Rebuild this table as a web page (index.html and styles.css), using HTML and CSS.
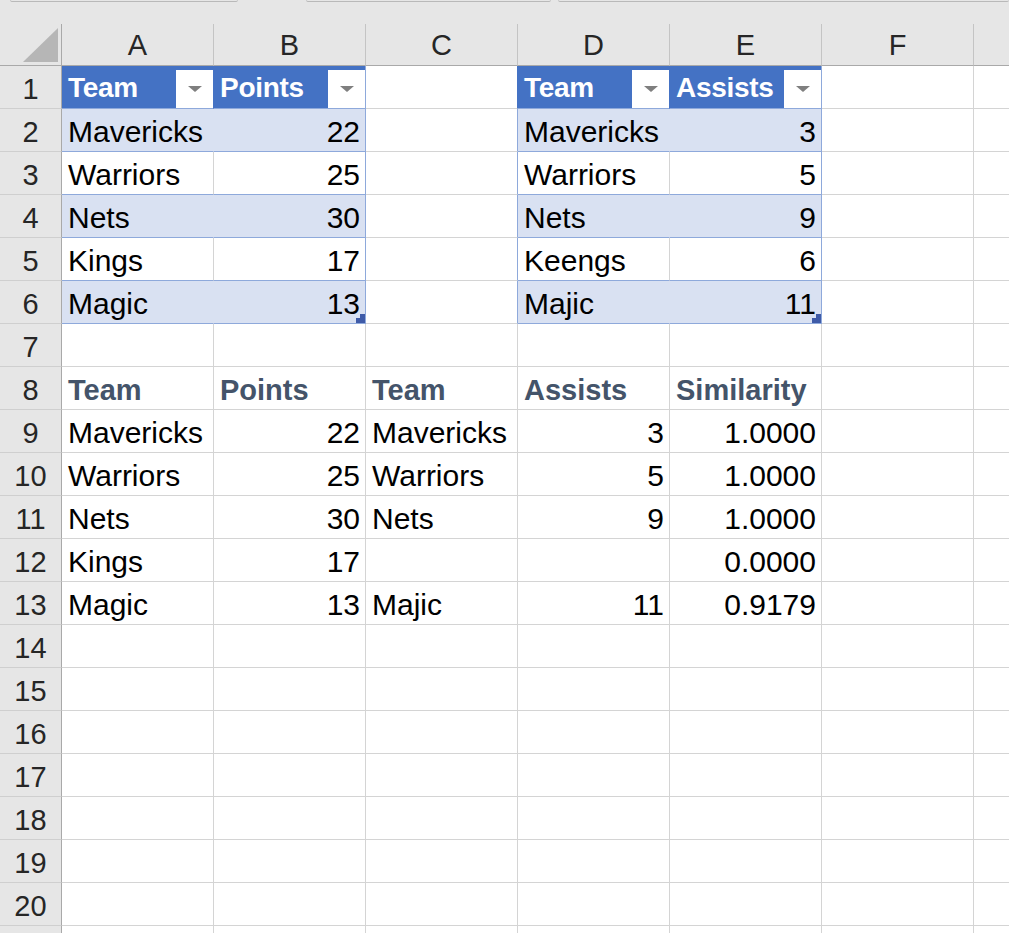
FILE: index.html
```html
<!DOCTYPE html>
<html>
<head>
<meta charset="utf-8">
<link rel="stylesheet" href="styles.css">
</head>
<body>
<div class="topbar">
  <span class="seg s1"></span><span class="seg s2"></span><span class="seg s3"></span>
</div>
<div class="sheet">
  <div class="row hdr">
    <div class="corner"><svg width="61" height="41" viewBox="0 0 61 41"><polygon points="23,38 58,38 58,4" fill="#b6b6b6"/></svg></div>
    <div class="ch">A</div><div class="ch">B</div><div class="ch">C</div><div class="ch">D</div><div class="ch">E</div><div class="ch">F</div><div class="ch"></div>
  </div>

  <div class="row">
    <div class="rh">1</div>
    <div class="c th"><span>Team</span><span class="dd"><i></i></span></div>
    <div class="c th te"><span>Points</span><span class="dd"><i></i></span></div>
    <div class="c edge-h"></div>
    <div class="c th"><span>Team</span><span class="dd"><i></i></span></div>
    <div class="c th te"><span>Assists</span><span class="dd"><i></i></span></div>
    <div class="c"></div><div class="c"></div>
  </div>

  <div class="row">
    <div class="rh">2</div>
    <div class="c tb band">Mavericks</div>
    <div class="c tb band te n">22</div>
    <div class="c edge"></div>
    <div class="c tb band">Mavericks</div>
    <div class="c tb band te n">3</div>
    <div class="c"></div><div class="c"></div>
  </div>

  <div class="row">
    <div class="rh">3</div>
    <div class="c tb">Warriors</div>
    <div class="c tb te n">25</div>
    <div class="c edge"></div>
    <div class="c tb">Warriors</div>
    <div class="c tb te n">5</div>
    <div class="c"></div><div class="c"></div>
  </div>

  <div class="row">
    <div class="rh">4</div>
    <div class="c tb band">Nets</div>
    <div class="c tb band te n">30</div>
    <div class="c edge"></div>
    <div class="c tb band">Nets</div>
    <div class="c tb band te n">9</div>
    <div class="c"></div><div class="c"></div>
  </div>

  <div class="row">
    <div class="rh">5</div>
    <div class="c tb">Kings</div>
    <div class="c tb te n">17</div>
    <div class="c edge"></div>
    <div class="c tb">Keengs</div>
    <div class="c tb te n">6</div>
    <div class="c"></div><div class="c"></div>
  </div>

  <div class="row">
    <div class="rh">6</div>
    <div class="c tb band">Magic</div>
    <div class="c tb band te n">13<svg class="handle" width="9" height="9" viewBox="0 0 9 9"><polygon points="4,0 9,0 9,9 0,9 0,4 4,4" fill="#3f5ba8"/></svg></div>
    <div class="c edge"></div>
    <div class="c tb band">Majic</div>
    <div class="c tb band te n">11<svg class="handle" width="9" height="9" viewBox="0 0 9 9"><polygon points="4,0 9,0 9,9 0,9 0,4 4,4" fill="#3f5ba8"/></svg></div>
    <div class="c"></div><div class="c"></div>
  </div>

  <div class="row">
    <div class="rh">7</div>
    <div class="c"></div><div class="c"></div><div class="c"></div><div class="c"></div><div class="c"></div><div class="c"></div><div class="c"></div>
  </div>

  <div class="row">
    <div class="rh">8</div>
    <div class="c h">Team</div>
    <div class="c h">Points</div>
    <div class="c h">Team</div>
    <div class="c h">Assists</div>
    <div class="c h">Similarity</div>
    <div class="c"></div><div class="c"></div>
  </div>

  <div class="row">
    <div class="rh">9</div>
    <div class="c">Mavericks</div>
    <div class="c n">22</div>
    <div class="c">Mavericks</div>
    <div class="c n">3</div>
    <div class="c n">1.0000</div>
    <div class="c"></div><div class="c"></div>
  </div>

  <div class="row">
    <div class="rh">10</div>
    <div class="c">Warriors</div>
    <div class="c n">25</div>
    <div class="c">Warriors</div>
    <div class="c n">5</div>
    <div class="c n">1.0000</div>
    <div class="c"></div><div class="c"></div>
  </div>

  <div class="row">
    <div class="rh">11</div>
    <div class="c">Nets</div>
    <div class="c n">30</div>
    <div class="c">Nets</div>
    <div class="c n">9</div>
    <div class="c n">1.0000</div>
    <div class="c"></div><div class="c"></div>
  </div>

  <div class="row">
    <div class="rh">12</div>
    <div class="c">Kings</div>
    <div class="c n">17</div>
    <div class="c"></div>
    <div class="c n"></div>
    <div class="c n">0.0000</div>
    <div class="c"></div><div class="c"></div>
  </div>

  <div class="row">
    <div class="rh">13</div>
    <div class="c">Magic</div>
    <div class="c n">13</div>
    <div class="c">Majic</div>
    <div class="c n">11</div>
    <div class="c n">0.9179</div>
    <div class="c"></div><div class="c"></div>
  </div>

  <div class="row"><div class="rh">14</div><div class="c"></div><div class="c"></div><div class="c"></div><div class="c"></div><div class="c"></div><div class="c"></div><div class="c"></div></div>
  <div class="row"><div class="rh">15</div><div class="c"></div><div class="c"></div><div class="c"></div><div class="c"></div><div class="c"></div><div class="c"></div><div class="c"></div></div>
  <div class="row"><div class="rh">16</div><div class="c"></div><div class="c"></div><div class="c"></div><div class="c"></div><div class="c"></div><div class="c"></div><div class="c"></div></div>
  <div class="row"><div class="rh">17</div><div class="c"></div><div class="c"></div><div class="c"></div><div class="c"></div><div class="c"></div><div class="c"></div><div class="c"></div></div>
  <div class="row"><div class="rh">18</div><div class="c"></div><div class="c"></div><div class="c"></div><div class="c"></div><div class="c"></div><div class="c"></div><div class="c"></div></div>
  <div class="row"><div class="rh">19</div><div class="c"></div><div class="c"></div><div class="c"></div><div class="c"></div><div class="c"></div><div class="c"></div><div class="c"></div></div>
  <div class="row"><div class="rh">20</div><div class="c"></div><div class="c"></div><div class="c"></div><div class="c"></div><div class="c"></div><div class="c"></div><div class="c"></div></div>
  <div class="row"><div class="rh"></div><div class="c"></div><div class="c"></div><div class="c"></div><div class="c"></div><div class="c"></div><div class="c"></div><div class="c"></div></div>
</div>
</body>
</html>
```

FILE: styles.css
```css
* { box-sizing: border-box; }
html, body {
  margin: 0;
  padding: 0;
  background: #ffffff;
  overflow: hidden;
  width: 1009px;
  height: 933px;
}
body {
  font-family: "Liberation Sans", Arial, sans-serif;
  font-size: 30px;
  color: #000000;
}

.topbar {
  height: 24px;
  background: #e6e6e6;
  position: relative;
  display: flex;
}
.seg {
  display: block;
  height: 2px;
  border-bottom: 1px solid #b9b9b9;
  border-left: 1px solid #c8c8c8;
  border-right: 1px solid #c8c8c8;
  border-radius: 0 0 2px 2px;
}
.s1 { margin-left: 10px; width: 228px; }
.s2 { margin-left: 68px; width: 245px; }
.s3 { margin-left: 7px; flex: 1; border-right: none; }

.sheet { width: 1009px; overflow: hidden; }

.row {
  display: grid;
  grid-template-columns: 62px repeat(7, 152px);
  height: 43px;
}
.row.hdr { height: 42px; }

.corner {
  background: #e6e6e6;
  border-right: 1px solid #a9a9a9;
  border-bottom: 1px solid #a9a9a9;
  height: 42px;
}
.corner svg { display: block; }

.ch {
  background: #e6e6e6;
  border-right: 1px solid #c4c4c4;
  border-bottom: 1px solid #a9a9a9;
  text-align: center;
  padding-top: 2px;
  line-height: 38px;
  color: #262626;
  font-size: 29px;
}

.rh {
  background: #e6e6e6;
  border-right: 1px solid #a9a9a9;
  border-bottom: 1px solid #cfcfcf;
  text-align: center;
  padding-top: 4px;
  line-height: 38px;
  color: #262626;
  font-size: 29px;
}

.c {
  position: relative;
  border-right: 1px solid #d4d4d4;
  border-bottom: 1px solid #d4d4d4;
  padding: 4px 5px 0 6px;
  line-height: 38px;
  white-space: nowrap;
  overflow: hidden;
}
.n { text-align: right; }

/* table header */
.th {
  background: #4472c4;
  color: #ffffff;
  font-weight: bold;
  font-size: 28px;
  letter-spacing: -0.3px;
  border-right-color: #4472c4;
  border-bottom-color: #8ea9db;
  display: flex;
  justify-content: space-between;
  align-items: flex-end;
  padding: 3px 0 0 6px;
}
.th span:first-child { line-height: 38px; align-self: flex-start; }
.dd {
  width: 37px;
  height: 38px;
  background: #ffffff;
  display: flex;
  align-items: center;
  justify-content: center;
}
.dd i {
  display: block;
  width: 0;
  height: 0;
  border-left: 7px solid transparent;
  border-right: 7px solid transparent;
  border-top: 6px solid #7f7f7f;
}

/* table body */
.tb { border-bottom-color: #8ea9db; }
.tb.band { background: #d9e1f2; border-right-color: #d9e1f2; }
.te { border-right-color: #8ea9db; }
.tb.band.te { border-right-color: #8ea9db; }
.edge { border-right-color: #8ea9db; }
.edge-h { border-right-color: #4472c4; }

.handle {
  position: absolute;
  right: 0;
  bottom: 0;
  display: block;
}

/* lower header */
.h {
  font-weight: bold;
  font-size: 29px;
  color: #44546a;
}
```
